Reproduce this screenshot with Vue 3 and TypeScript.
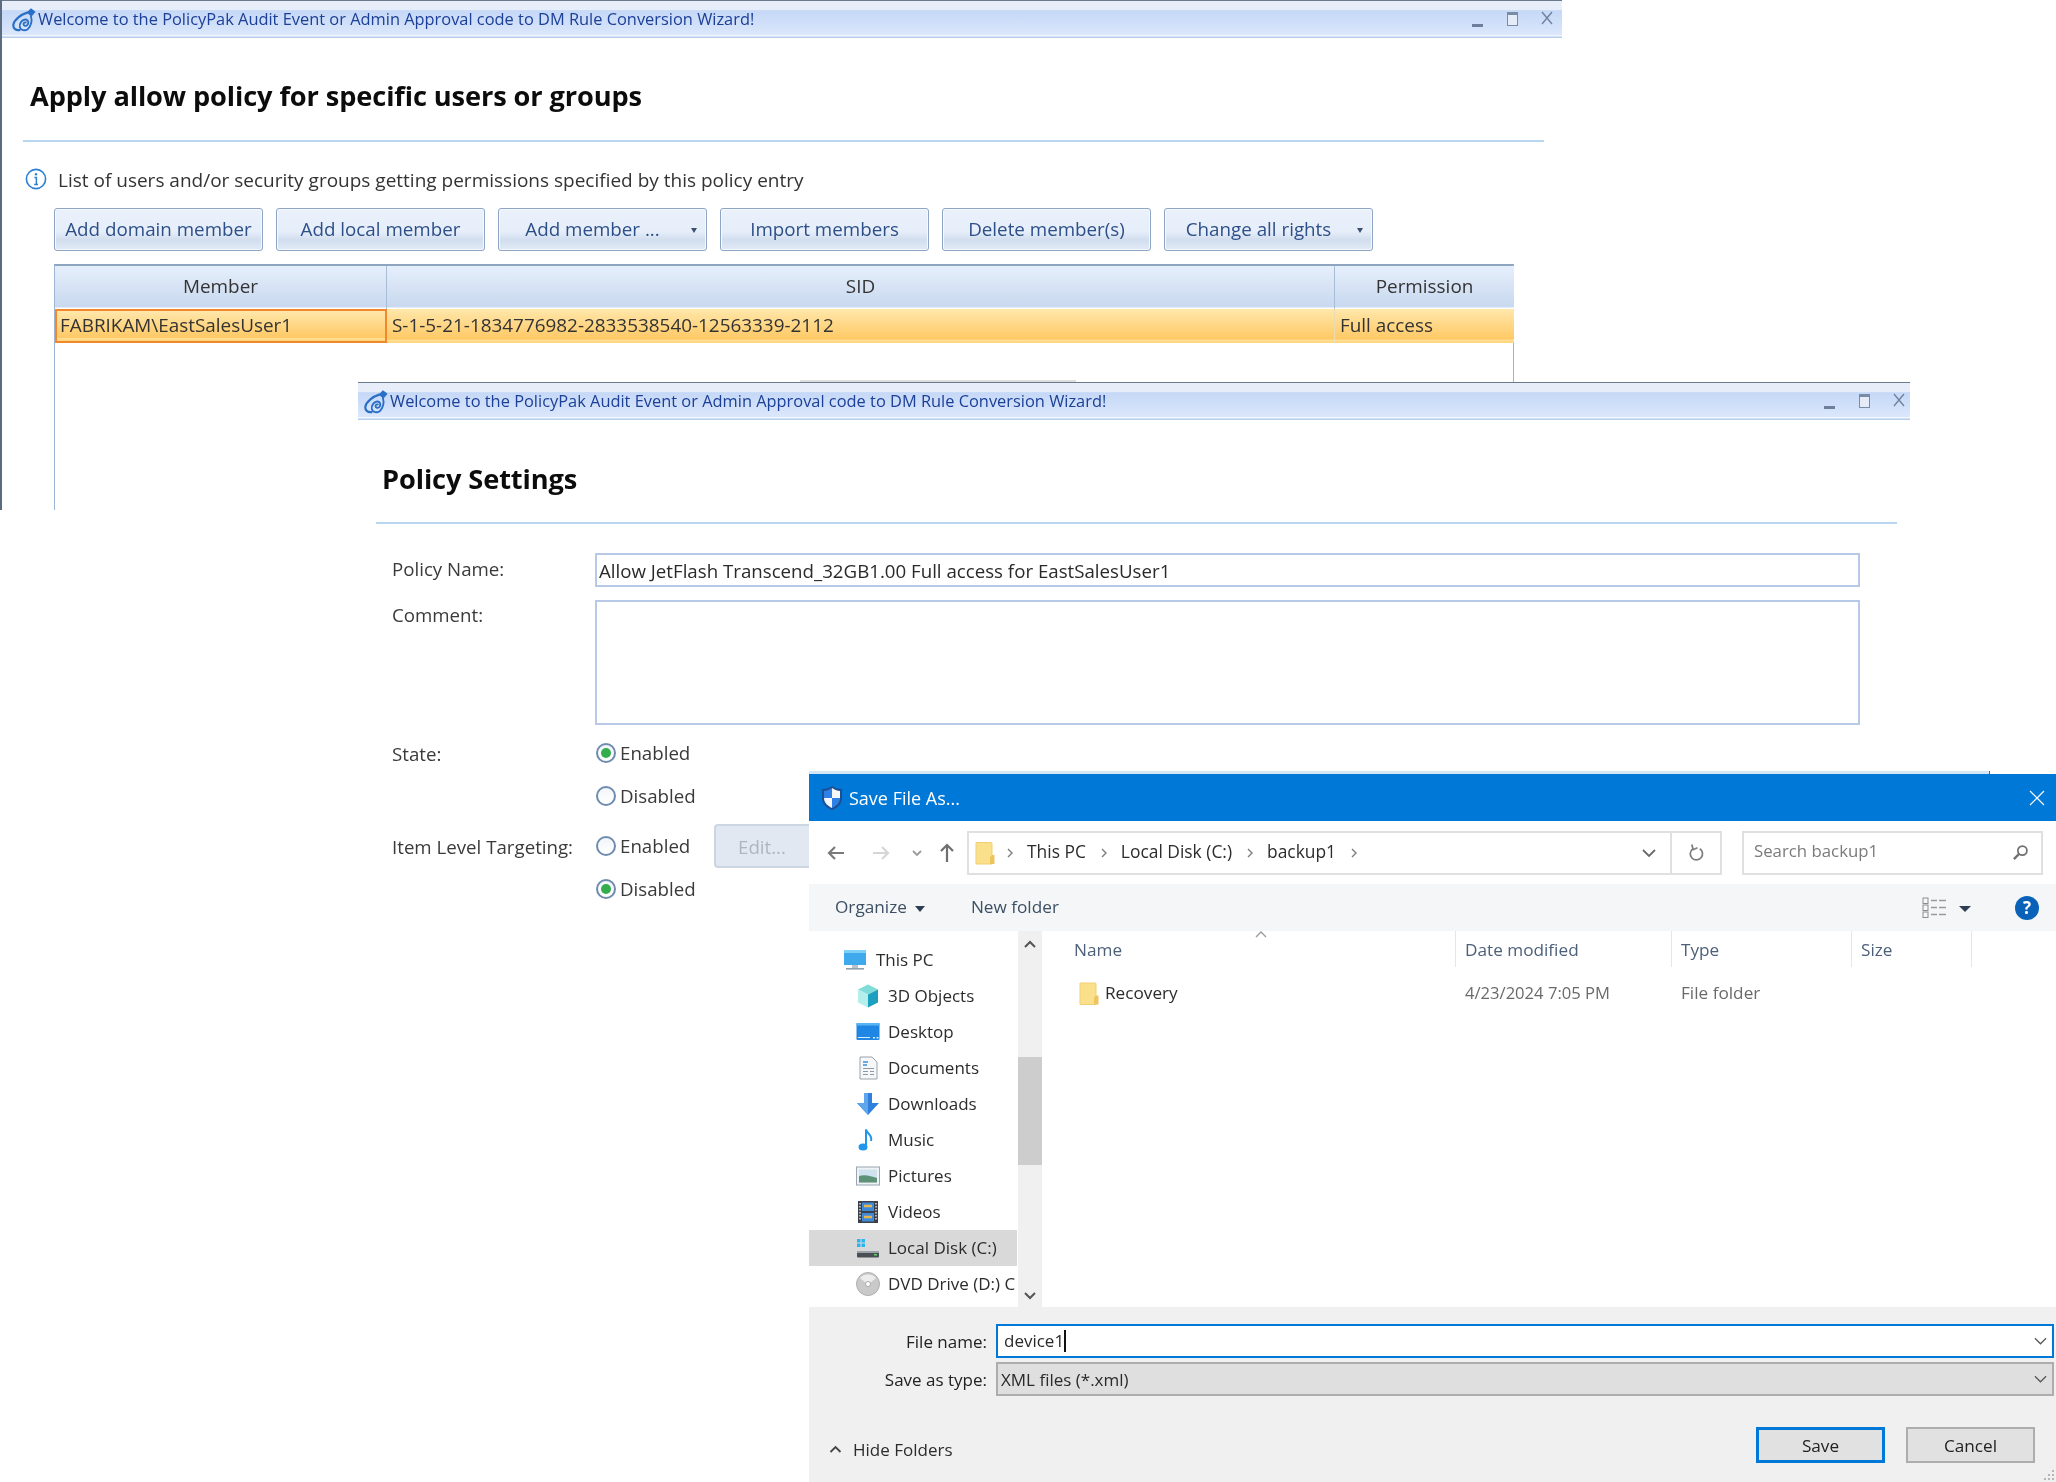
<script setup lang="ts">
const wizardTitle = 'Welcome to the PolicyPak Audit Event or Admin Approval code to DM Rule Conversion Wizard!'
const buttons = [
  { label: 'Add domain member', cls: '' },
  { label: 'Add local member', cls: '' },
  { label: 'Add member ...', cls: 'drop' },
  { label: 'Import members', cls: '' },
  { label: 'Delete member(s)', cls: '' },
  { label: 'Change all rights', cls: 'drop' },
]
const navItems = [
  { label: 'This PC', icon: 'pc', top: true },
  { label: '3D Objects', icon: 'cube' },
  { label: 'Desktop', icon: 'desktop' },
  { label: 'Documents', icon: 'docs' },
  { label: 'Downloads', icon: 'down' },
  { label: 'Music', icon: 'music' },
  { label: 'Pictures', icon: 'pics' },
  { label: 'Videos', icon: 'video' },
  { label: 'Local Disk (C:)', icon: 'disk', selected: true },
  { label: 'DVD Drive (D:) C', icon: 'dvd' },
]
const crumbs = ['This PC', 'Local Disk (C:)', 'backup1']
</script>

<template>
  <div class="canvas">
    <svg class="sprite" width="0" height="0" aria-hidden="true">
      <symbol id="pp" viewBox="0 0 26 26">
        <path d="M16 5.500 20.500 0.800 25.500 4.500 21 10Z" fill="#2a6fc6" />
        <path d="M16.500 5.500C10 7.500 2.500 13 1.500 18.500C1 22.500 4 25 8 24.500" fill="none" stroke="#2a6fc6" stroke-width="2.400" stroke-linecap="round" />
        <path d="M20.500 9.500C22 14 21 20 17 23.500C14 25.500 9.500 25 8.500 21.500C7.500 17 11.500 12.500 15 13C18 13.500 18.500 17 16.500 19C15 20.500 12.500 20 12.500 18C12.500 16.800 13.500 16 15 16.200" fill="none" stroke="#2a6fc6" stroke-width="2" stroke-linecap="round" />
      </symbol>
      <symbol id="folder" viewBox="0 0 20 24">
        <path d="M1 1.500 H16 A1 1 0 0 1 17 2.500 V23 H1 Z" fill="#fbe08c" stroke="#f0cf74" />
        <path d="M17 14 H19.500 V23 H15 V16 Z" fill="#eec45e" />
      </symbol>
    </svg>

    <section class="win win-back">
      <header class="titlebar">
        <svg class="pp-icon"><use href="#pp" /></svg>
        <span class="title-text">{{ wizardTitle }}</span>
        <span class="win-btns">
          <i class="w-min"></i><i class="w-max"></i>
          <svg class="w-x" viewBox="0 0 12 14"><path d="M1 1 11 13M11 1 1 13" stroke="#6d7f9c" stroke-width="1.300" fill="none" /></svg>
        </span>
      </header>
      <h1 class="heading">Apply allow policy for specific users or groups</h1>
      <div class="rule"></div>
      <div class="info">
        <svg class="info-icon" viewBox="0 0 22 22">
          <circle cx="11" cy="11" r="9.600" fill="#fff" stroke="#2a80d6" stroke-width="1.600" />
          <circle cx="11" cy="6.200" r="1.200" fill="#2a80d6" />
          <path d="M9.400 9.600H11.400V16.400M9.200 16.600H13" stroke="#2a80d6" stroke-width="1.500" fill="none" />
        </svg>
        <span>List of users and/or security groups getting permissions specified by this policy entry</span>
      </div>
      <div class="toolbar">
        <button v-for="b in buttons" :key="b.label" class="blue-btn" :class="b.cls">
          <span>{{ b.label }}</span>
          <i v-if="b.cls" class="mini-caret"></i>
        </button>
      </div>
      <div class="grid">
        <div class="th">Member</div>
        <div class="th">SID</div>
        <div class="th">Permission</div>
        <div class="td td-focus">FABRIKAM\EastSalesUser1</div>
        <div class="td">S-1-5-21-1834776982-2833538540-12563339-2112</div>
        <div class="td">Full access</div>
      </div>
      <div class="hscroll"></div>
    </section>

    <section class="win win-front">
      <header class="titlebar">
        <svg class="pp-icon"><use href="#pp" /></svg>
        <span class="title-text">{{ wizardTitle }}</span>
        <span class="win-btns">
          <i class="w-min"></i><i class="w-max"></i>
          <svg class="w-x" viewBox="0 0 12 14"><path d="M1 1 11 13M11 1 1 13" stroke="#6d7f9c" stroke-width="1.300" fill="none" /></svg>
        </span>
      </header>
      <h1 class="heading heading-b">Policy Settings</h1>
      <div class="rule rule-b"></div>
      <form class="form" @submit.prevent>
        <div class="f-row r-name">
          <label class="f-label">Policy Name:</label>
          <div class="f-input">Allow JetFlash Transcend_32GB1.00 Full access for EastSalesUser1</div>
        </div>
        <div class="f-row r-comment">
          <label class="f-label">Comment:</label>
          <div class="f-area"></div>
        </div>
        <div class="f-row r-radio">
          <label class="f-label">State:</label>
          <span class="radio on"></span><span class="r-text">Enabled</span>
        </div>
        <div class="f-row r-radio">
          <label class="f-label"></label>
          <span class="radio"></span><span class="r-text">Disabled</span>
        </div>
        <div class="f-row r-target">
          <label class="f-label">Item Level Targeting:</label>
          <span class="radio"></span><span class="r-text">Enabled</span>
          <button class="edit-btn">Edit...</button>
        </div>
        <div class="f-row r-radio r-last">
          <label class="f-label"></label>
          <span class="radio on"></span><span class="r-text">Disabled</span>
        </div>
      </form>
    </section>

    <section class="dlg">
      <i class="dlg-edge"></i>
      <header class="dlg-title">
        <svg class="shield" viewBox="0 0 22 26">
          <path d="M11 1 C14 3 17 4 21 4 V13 C21 19 16 23 11 25 C6 23 1 19 1 13 V4 C5 4 8 3 11 1 Z" fill="#1c4f94" />
          <path d="M11 3 C14 5 16.500 5.700 19 6 V13 H11 Z" fill="#f4f7fb" />
          <path d="M11 13 H3 C3 18 7 21 11 23 Z" fill="#f4f7fb" />
          <path d="M11 3 C8 5 5.500 5.700 3 6 V13 H11 Z" fill="#2f80e4" />
          <path d="M11 13 H19 C19 18 15 21 11 23 Z" fill="#2f80e4" />
        </svg>
        <span>Save File As...</span>
        <svg class="dlg-x" viewBox="0 0 16 16"><path d="M1 1 15 15M15 1 1 15" stroke="#fff" stroke-width="1.200" fill="none" /></svg>
      </header>

      <div class="navbar">
        <svg class="nav-ico back" viewBox="0 0 18 16"><path d="M8 2 2 8 8 14M2 8H17" stroke="#7a7a7a" stroke-width="2.200" fill="none" /></svg>
        <svg class="nav-ico fwd" viewBox="0 0 18 16"><path d="M10 2 16 8 10 14M16 8H1" stroke="#d6d6d6" stroke-width="2.200" fill="none" /></svg>
        <svg class="nav-mini" viewBox="0 0 10 6"><path d="M1 1 5 5 9 1" stroke="#9a9a9a" stroke-width="1.800" fill="none" /></svg>
        <svg class="nav-ico up" viewBox="0 0 16 20"><path d="M2 8 8 2 14 8M8 2V19" stroke="#6f6f6f" stroke-width="2.200" fill="none" /></svg>
        <div class="addr">
          <svg class="addr-folder"><use href="#folder" /></svg>
          <template v-for="c in crumbs" :key="c">
            <svg class="crumb-sep" viewBox="0 0 6 10"><path d="M1 1 5 5 1 9" stroke="#7d7d7d" stroke-width="1.400" fill="none" /></svg>
            <span class="crumb">{{ c }}</span>
          </template>
          <svg class="crumb-sep" viewBox="0 0 6 10"><path d="M1 1 5 5 1 9" stroke="#7d7d7d" stroke-width="1.400" fill="none" /></svg>
          <svg class="addr-drop" viewBox="0 0 14 8"><path d="M1 1 7 7 13 1" stroke="#6a6a6a" stroke-width="1.800" fill="none" /></svg>
          <div class="addr-refresh">
            <svg viewBox="0 0 18 20" width="17" height="19"><path d="M12.500 6 A6.500 6.500 0 1 1 5 6.200" stroke="#7c7c7c" stroke-width="1.800" fill="none" /><path d="M4 1.500 5.500 7 10 5" stroke="#7c7c7c" stroke-width="1.800" fill="none" /></svg>
          </div>
        </div>
        <div class="search">
          <span>Search backup1</span>
          <svg viewBox="0 0 18 18" width="17" height="17"><circle cx="11" cy="7" r="4.800" stroke="#6f6f6f" stroke-width="1.800" fill="none" /><path d="M7.500 10.500 2 16" stroke="#6f6f6f" stroke-width="2.400" /></svg>
        </div>
      </div>

      <div class="cmdbar">
        <span class="cmd">Organize</span>
        <i class="cmd-caret"></i>
        <span class="cmd new">New folder</span>
        <svg class="views" viewBox="0 0 26 22">
          <g fill="none" stroke="#8d8d8d"><rect x="1" y="1" width="5" height="5.500" /><rect x="1" y="8" width="5" height="5.500" /><rect x="1" y="15" width="5" height="5.500" /></g>
          <path d="M9 3.500H15M17 3.500H24M9 10.500H15M17 10.500H24M9 17.500H15M17 17.500H24" stroke="#9a9a9a" stroke-width="1.500" />
        </svg>
        <i class="cmd-caret dark"></i>
        <span class="help">?</span>
      </div>

      <div class="browser">
        <nav class="tree">
          <div v-for="n in navItems" :key="n.label" class="tree-row" :class="{ sel: n.selected, top: n.top }">
            <svg class="t-ico" viewBox="0 0 24 24">
              <template v-if="n.icon === 'pc'">
                <rect x="1" y="2" width="22" height="15" fill="#3fa9ee" /><rect x="1" y="2" width="22" height="3" fill="#7fd0f7" />
                <path d="M9 17h6v3H9z" fill="#b9c3cc" /><rect x="3" y="20" width="18" height="1.600" fill="#8fa0ae" />
              </template>
              <template v-else-if="n.icon === 'cube'">
                <path d="M12 0.500 22 5.500 12 10.500 2 5.500Z" fill="#7fdcd8" /><path d="M2 5.500 12 10.500V23.500L2 18.500Z" fill="#b5efec" /><path d="M22 5.500 12 10.500V23.500L22 18.500Z" fill="#1d9fc0" />
              </template>
              <template v-else-if="n.icon === 'desktop'">
                <rect x="0.500" y="3" width="23" height="17" rx="1" fill="#1f86e3" /><rect x="0.500" y="3" width="23" height="2.500" fill="#59b4f4" /><path d="M2 17.500h12" stroke="#d7ecfb" stroke-width="1" /><rect x="17" y="17" width="2" height="1.500" fill="#d7ecfb" /><rect x="20.500" y="17" width="2" height="1.500" fill="#d7ecfb" />
              </template>
              <template v-else-if="n.icon === 'docs'">
                <path d="M4 1H16L21 6V23H4Z" fill="#f5f7f9" stroke="#9aa3ad" /><path d="M7 6h5M7 9h4" stroke="#3b8fdc" stroke-width="1.600" /><path d="M7 12.500h11M7 15.500h5M7 18.500h5M14 15.500h4M14 18.500h4" stroke="#8c98a5" stroke-width="1.200" />
              </template>
              <template v-else-if="n.icon === 'down'">
                <path d="M8 1H16V11H23L12 23 1 11H8Z" fill="#2f80dc" /><path d="M8 1H12V23L1 11H8Z" fill="#5fa6ec" />
              </template>
              <template v-else-if="n.icon === 'music'">
                <path d="M10 1.500V18" stroke="#2196ea" stroke-width="2" /><ellipse cx="7" cy="19" rx="4.500" ry="3.500" fill="#2196ea" /><path d="M10 1.500C11 6 17 7 15 13" stroke="#2196ea" stroke-width="2" fill="none" />
              </template>
              <template v-else-if="n.icon === 'pics'">
                <rect x="0.500" y="3" width="23" height="18" fill="#f0f3f5" stroke="#9aa7b2" /><rect x="3" y="5.500" width="18" height="13" fill="#cfe2ee" /><path d="M3 12C9 10 15 12 21 14V18.500H3Z" fill="#5d9178" />
              </template>
              <template v-else-if="n.icon === 'video'">
                <rect x="2" y="1" width="20" height="22" fill="#3c4148" /><rect x="6" y="2.500" width="12" height="8.500" fill="#3f8ad8" /><rect x="6" y="13" width="12" height="8.500" fill="#3f8ad8" /><path d="M8 6h8M8 17h8" stroke="#e9b64b" stroke-width="2.400" /><path d="M4 3v18M20 3v18" stroke="#d9dde0" stroke-width="1.500" stroke-dasharray="1.500 1.500" />
              </template>
              <template v-else-if="n.icon === 'disk'">
                <rect x="1" y="3" width="3.500" height="3.500" fill="#2cb5ef" /><rect x="5.500" y="3" width="3.500" height="3.500" fill="#2cb5ef" /><rect x="1" y="7.500" width="3.500" height="3.500" fill="#2cb5ef" /><rect x="5.500" y="7.500" width="3.500" height="3.500" fill="#2cb5ef" />
                <rect x="1" y="15" width="22" height="6.500" rx="1" fill="#4a4f55" /><rect x="1" y="15" width="22" height="2" fill="#9aa1a8" /><rect x="18" y="18" width="3" height="1.500" fill="#5fd35f" />
              </template>
              <template v-else>
                <circle cx="12" cy="12" r="11.500" fill="#c9c9c9" /><circle cx="12" cy="12" r="11.500" fill="none" stroke="#b0b0b0" /><path d="M4 6a11 11 0 0 1 16 0L14 11a3 3 0 0 0-4 0Z" fill="#ececec" /><circle cx="12" cy="12" r="2.500" fill="#fff" stroke="#a8a8a8" />
              </template>
            </svg>
            <span>{{ n.label }}</span>
          </div>
        </nav>
        <div class="vbar">
          <svg viewBox="0 0 12 8" width="12" height="8"><path d="M1 7 6 2 11 7" stroke="#555" stroke-width="2" fill="none" /></svg>
          <div class="thumb"></div>
          <svg viewBox="0 0 12 8" width="12" height="8"><path d="M1 1 6 6 11 1" stroke="#555" stroke-width="2" fill="none" /></svg>
        </div>
        <div class="files">
          <div class="f-head">
            <div class="col c-name">Name<svg class="sort" viewBox="0 0 12 7"><path d="M1 6 6 1 11 6" stroke="#9a9a9a" stroke-width="1.300" fill="none" /></svg></div>
            <div class="col c-date">Date modified</div>
            <div class="col c-type">Type</div>
            <div class="col c-size">Size</div>
          </div>
          <div class="f-rowline">
            <div class="c-name cell-name"><svg class="row-folder"><use href="#folder" /></svg><span>Recovery</span></div>
            <div class="c-date cell date">4/23/2024 7:05 PM</div>
            <div class="c-type cell">File folder</div>
          </div>
        </div>
      </div>

      <footer class="bottom">
        <div class="b-row first">
          <span class="b-label">File name:</span>
          <div class="b-input"><span>device1</span><i class="cursor"></i>
            <svg viewBox="0 0 14 8" width="13" height="8"><path d="M1 1 7 7 13 1" stroke="#555" stroke-width="1.300" fill="none" /></svg>
          </div>
        </div>
        <div class="b-row second">
          <span class="b-label">Save as type:</span>
          <div class="b-select"><span>XML files (*.xml)</span>
            <svg viewBox="0 0 14 8" width="13" height="8"><path d="M1 1 7 7 13 1" stroke="#555" stroke-width="1.300" fill="none" /></svg>
          </div>
        </div>
        <div class="b-actions">
          <div class="hide"><svg viewBox="0 0 12 8" width="13" height="8"><path d="M1 7 6 2 11 7" stroke="#444" stroke-width="1.800" fill="none" /></svg><span>Hide Folders</span></div>
          <button class="d-btn primary">Save</button>
          <button class="d-btn">Cancel</button>
        </div>
        <svg class="grip" viewBox="0 0 12 12" width="12" height="12"><g fill="#b5b5b5"><rect x="9" y="1" width="2" height="2" /><rect x="9" y="5" width="2" height="2" /><rect x="5" y="5" width="2" height="2" /><rect x="9" y="9" width="2" height="2" /><rect x="5" y="9" width="2" height="2" /><rect x="1" y="9" width="2" height="2" /></g></svg>
      </footer>
    </section>
  </div>
</template>

<style>
html, body { margin: 0; background: #fff; }
</style>

<style scoped>
.canvas { position: relative; width: 2056px; height: 1482px; overflow: hidden; background: #fff; font-family: "Open Sans", "Noto Sans", sans-serif; color: #2a2a2a; filter: blur(0.4px); }
.sprite { position: absolute; }
.win { position: absolute; background: #fff; box-sizing: border-box; }
.win-back { left: 0; top: 0; width: 1562px; height: 510px; border-left: 2px solid #5c6c80; overflow: hidden; }
.win-front { left: 358px; top: 382px; width: 1552px; height: 1100px; }

.titlebar { display: flex; align-items: center; height: 38px; box-sizing: border-box; padding: 0 0 0 10px; background: linear-gradient(#e7eef9 0, #e7eef9 24%, #c5d8f7 26%, #dbe7fb 92%, #f4f8fe 93%, #a8c3e8 100%); border-top: 1px solid #6a7a8f; }
.win-front .titlebar { padding-left: 6px; }
.pp-icon { width: 24px; height: 25px; flex: none; margin-right: 2px; }
.title-text { font-size: 16.400px; color: #1c3f97; white-space: nowrap; padding-bottom: 2px; }
.win-btns { margin-left: auto; display: flex; align-items: center; width: 90px; height: 20px; position: relative; }
.win-back .win-btns { margin-right: 4px; }
.w-min { position: absolute; left: 4px; top: 14px; width: 11px; height: 3px; background: #6d7f9c; }
.w-max { position: absolute; left: 39px; top: 2px; width: 9px; height: 10px; border: 1px solid #7a8ba6; border-top-width: 3px; background: #e5ecf8; }
.w-x { position: absolute; left: 73px; top: 1px; width: 12px; height: 14px; }

.heading { margin: 0; height: 102px; box-sizing: border-box; padding: 38px 0 0 28px; font-size: 27.200px; line-height: 40px; font-weight: 700; color: #0c0c0c; letter-spacing: -0.1px; }
.heading-b { padding-left: 24px; padding-top: 39px; }
.rule { height: 2px; margin: 0 18px 0 21px; background: #b8d5f1; }
.rule-b { margin: 0 13px 0 18px; }

.info { display: flex; align-items: center; margin: 26px 0 0 23px; height: 24px; font-size: 19px; color: #333; }
.info-icon { width: 22px; height: 22px; margin-right: 11px; position: relative; top: -1px; }
.toolbar { display: flex; gap: 13px; margin: 16px 0 0 52px; }
.blue-btn { position: relative; width: 209px; height: 43px; padding: 0; box-sizing: border-box; border: 1px solid #8ea5c4; border-radius: 3px; background: linear-gradient(#eaf1fb 0, #e6eefa 55%, #d2deee 75%, #e2eaf6 100%); color: #2d4f88; font: 18.800px "Open Sans", sans-serif; box-shadow: inset 0 0 0 1px #f5f8fd; }
.blue-btn span { position: relative; top: -1px; }
.blue-btn.drop span { left: -10px; }
.mini-caret { position: absolute; right: 9px; top: 19px; border: 3.500px solid transparent; border-top: 5px solid #3b4f70; border-bottom: 0; }

.grid { display: grid; grid-template-columns: 332px 948px 179px; grid-template-rows: 43px 34px 170px; margin: 13px 0 0 52px; width: 1460px; border-top: 2px solid #8ea5c0; border-left: 1px solid #9db6d3; border-right: 1px solid #9db6d3; box-sizing: border-box; font-size: 18.900px; color: #333; }
.th { display: flex; align-items: center; justify-content: center; padding-bottom: 3px; box-sizing: border-box; background: linear-gradient(#e6effc, #c8d8ee 96%, #fff 97%); border-right: 1px solid #a9bdd6; }
.th:nth-child(3) { border-right: 0; }
.td { display: flex; align-items: center; padding: 0 0 2px 5px; background: linear-gradient(#ffe7ab, #ffc965 88%, #ffdf95 92%, #ffd27a); box-sizing: border-box; border-right: 1px solid #ecdcb2; white-space: nowrap; }
.td:last-child { border-right: 0; }
.td-focus { border: 2px solid #f1882c; padding-left: 3px; }
.hscroll { position: absolute; left: 798px; top: 380px; width: 276px; height: 2px; background: #dedede; }

.form { padding: 29px 0 0 34px; display: flex; flex-direction: column; }
.f-row { display: flex; align-items: center; font-size: 18.700px; color: #3a3a3a; }
.f-label { width: 203px; flex: none; }
.r-name { height: 34px; }
.r-name .f-label { position: relative; top: -2px; }
.f-input { width: 1265px; height: 34px; box-sizing: border-box; border: 2px solid #b7c9e6; display: flex; align-items: center; padding: 0 0 0 2px; color: #2a2a2a; white-space: nowrap; }
.r-comment { margin-top: 13px; align-items: flex-start; }
.r-comment .f-label { line-height: 30px; }
.f-area { width: 1265px; height: 125px; box-sizing: border-box; border: 2px solid #b7c9e6; }
.r-radio { height: 30px; margin-top: 13px; }
.r-target { height: 44px; margin-top: 13px; }
.r-last { margin-top: 6px; }
.radio { width: 20px; height: 20px; box-sizing: border-box; border: 2px solid #6f8cb0; border-radius: 50%; background: linear-gradient(#f2f5f8, #fff); margin: 0 4px 0 1px; display: flex; align-items: center; justify-content: center; flex: none; }
.radio.on::after { content: ""; width: 10px; height: 10px; border-radius: 50%; background: #33ad4d; }
.r-text { width: 94px; padding-bottom: 1px; }
.edit-btn { width: 120px; height: 44px; border: 2px solid #ccd6e2; border-radius: 4px; background: #e1e8f1; color: #aeb6c0; font: 18.700px "Open Sans", sans-serif; text-align: left; padding-left: 22px; margin-left: 0; }

.dlg { position: absolute; left: 809px; top: 774px; width: 1247px; height: 708px; background: #fff; display: flex; flex-direction: column; font-size: 17.200px; }
.dlg-edge { position: absolute; left: 0; top: -3px; width: 1180px; height: 3px; background: #d5e6f7; border-right: 1px solid #566; }
.dlg-title { height: 47px; flex: none; background: #0078d7; color: #fff; display: flex; align-items: center; padding: 1px 0 0 12px; font-size: 18px; box-sizing: border-box; }
.shield { width: 22px; height: 26px; margin-right: 6px; }
.dlg-x { width: 16px; height: 16px; margin-left: auto; margin-right: 11px; }

.navbar { height: 63px; flex: none; display: flex; align-items: center; position: relative; }
.nav-ico.back { width: 18px; height: 16px; margin-left: 18px; }
.nav-ico.fwd { width: 18px; height: 16px; margin-left: 27px; }
.nav-mini { width: 10px; height: 6px; margin-left: 22px; }
.nav-ico.up { width: 16px; height: 20px; margin-left: 17px; }
.addr { width: 755px; height: 44px; box-sizing: border-box; border: 2px solid #e0e0e0; margin-left: 12px; display: flex; align-items: center; color: #2c2c2c; }
.addr-folder { width: 20px; height: 24px; margin-left: 6px; margin-right: 12px; flex: none; }
.crumb-sep { width: 6px; height: 10px; flex: none; margin-right: 14px; }
.crumb { margin-right: 15px; padding-bottom: 4px; font-size: 17.400px; }
.addr-drop { width: 14px; height: 8px; margin-left: auto; margin-right: 14px; }
.addr-refresh { width: 50px; height: 40px; border-left: 2px solid #e0e0e0; display: flex; align-items: center; justify-content: center; box-sizing: border-box; }
.search { margin-left: 20px; width: 301px; height: 44px; box-sizing: border-box; border: 2px solid #e0e0e0; display: flex; align-items: center; justify-content: space-between; padding: 0 12px 0 10px; color: #7b7b7b; font-size: 16.800px; }
.search span { padding-bottom: 4px; }

.cmdbar { height: 47px; flex: none; background: #f4f6f7; display: flex; align-items: center; padding: 0 17px 0 26px; color: #3d4f63; }
.cmd { padding-bottom: 3px; }
.cmd.new { margin-left: 46px; }
.cmd-caret { margin-left: 8px; border: 5px solid transparent; border-top: 6px solid #2e3f55; border-bottom: 0; margin-top: 2px; }
.cmd-caret.dark { margin-left: 11px; border-left-width: 6px; border-right-width: 6px; }
.views { width: 26px; height: 22px; margin-left: auto; }
.help { margin-left: 44px; width: 24px; height: 24px; border-radius: 50%; background: #0a62b8; color: #fff; font-weight: 700; font-size: 17px; line-height: 24px; text-align: center; }

.browser { height: 376px; flex: none; display: flex; }
.tree { width: 208px; flex: none; padding-top: 11px; box-sizing: border-box; overflow: hidden; color: #2c2c2c; font-size: 17px; }
.tree-row { display: flex; align-items: center; height: 36px; padding-left: 47px; white-space: nowrap; }
.tree-row span { padding-bottom: 1px; }
.tree-row.top { padding-left: 34px; }
.tree-row.top .t-ico { margin-right: 9px; }
.tree-row.sel { background: #d9d9d9; }
.t-ico { width: 24px; height: 24px; margin-right: 8px; flex: none; }
.vbar { width: 24px; flex: none; background: #f0f0f0; margin-left: 1px; position: relative; display: flex; flex-direction: column; align-items: center; padding-top: 9px; box-sizing: border-box; }
.thumb { width: 100%; height: 108px; background: #cdcdcd; margin-top: 109px; }
.vbar svg:last-child { margin-top: 127px; }
.files { flex: 1; margin-left: 5px; position: relative; min-width: 0; }
.f-head { display: flex; height: 36px; color: #4d607a; }
.col { border-right: 1px solid #e6e6e6; box-sizing: border-box; display: flex; align-items: center; position: relative; }
.c-name { width: 409px; padding-left: 27px; box-sizing: border-box; flex: none; }
.c-date { width: 216px; padding-left: 9px; box-sizing: border-box; flex: none; }
.c-type { width: 180px; padding-left: 9px; box-sizing: border-box; flex: none; }
.c-size { width: 120px; padding-left: 9px; box-sizing: border-box; flex: none; }
.sort { position: absolute; left: 208px; top: 0; width: 12px; height: 7px; }
.f-rowline { display: flex; height: 36px; margin-top: 7px; align-items: center; }
.cell { color: #6a6a6a; }
.cell.date { font-size: 16.600px; }
.cell-name { display: flex; align-items: center; padding-left: 32px; color: #2c2c2c; }
.row-folder { width: 20px; height: 25px; margin-right: 6px; flex: none; position: relative; top: 1px; }

.bottom { flex: 1; background: #f0f0f0; position: relative; display: flex; flex-direction: column; padding-right: 2px; font-size: 17px; }
.b-row { display: flex; align-items: center; height: 34px; }
.b-row.first { margin-top: 17px; }
.b-row.second { margin-top: 4px; }
.b-label { width: 178px; text-align: right; margin-right: 9px; flex: none; color: #222; }
.b-input { flex: 1; height: 34px; box-sizing: border-box; border: 2px solid #0078d7; background: #fff; display: flex; align-items: center; padding-left: 6px; padding-right: 5px; color: #2a2a2a; }
.b-input span { padding-bottom: 2px; }
.cursor { width: 1.500px; height: 22px; background: #111; }
.b-input svg, .b-select svg { margin-left: auto; }
.b-select { flex: 1; height: 34px; box-sizing: border-box; border: 2px solid #adadad; background: #dfdfdf; display: flex; align-items: center; padding-left: 3px; padding-right: 5px; color: #2a2a2a; }
.b-actions { display: flex; align-items: center; margin-top: 31px; height: 36px; padding-left: 20px; padding-right: 19px; }
.hide { display: flex; align-items: center; gap: 11px; margin-right: auto; position: relative; top: 4px; color: #2c2c2c; }
.d-btn { width: 129px; height: 36px; box-sizing: border-box; background: #e1e1e1; border: 2px solid #adadad; font: 17.200px "Open Sans", sans-serif; color: #222; padding: 0; }
.d-btn.primary { border: 3px solid #0078d7; margin-right: 21px; }
.grip { position: absolute; right: 1px; bottom: 1px; }
</style>
